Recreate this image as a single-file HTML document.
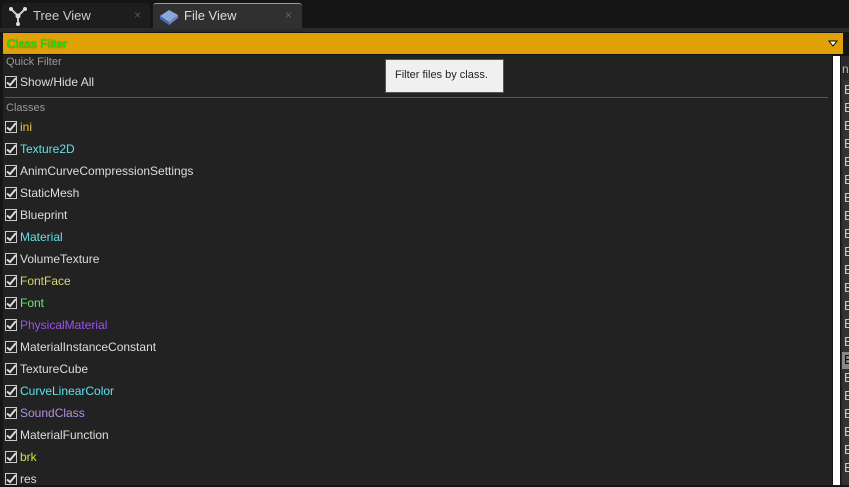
<!DOCTYPE html><html><head><style>
body{margin:0;width:849px;height:485px;background:#151515;overflow:hidden;position:relative;font-family:"Liberation Sans",sans-serif;font-size:12px;color:#ddd}
.abs{position:absolute}
.tab{position:absolute;top:3px;height:25px;background:#242424;border-radius:3px 3px 0 0}
.row{position:absolute;left:5px;height:16px;line-height:16px;font-size:12px}
.cb{display:inline-block;width:10px;height:10px;border:1px solid #ccc;vertical-align:-2px;margin-right:3px;position:relative}
.cb:after{content:"";position:absolute;left:3px;top:-1px;width:3px;height:8px;border:solid #ddd;border-width:0 2px 2px 0;transform:rotate(40deg)}
.e{position:absolute;left:844px;font-size:13px;color:#ccc}
</style></head><body>
<div class="abs" style="left:0;top:28px;width:849px;height:4px;background:#2a2a2a"></div>
<div class="tab" style="left:2px;width:148px;background:#1d1d1d"></div>
<svg class="abs" style="left:7px;top:5px" width="22" height="22"><g stroke="#ccc" stroke-width="2" fill="none"><path d="M4 4L11 11L18 4M11 11V19"/></g><circle cx="4" cy="4" r="2" fill="#ddd"/><circle cx="18" cy="4" r="2" fill="#ddd"/><circle cx="11" cy="11" r="2.5" fill="#ddd"/><circle cx="11" cy="19" r="2" fill="#ddd"/></svg>
<div class="abs" style="left:33px;top:8px;font-size:13px;color:#ccc">Tree View</div>
<div class="abs" style="left:134px;top:8px;font-size:12px;color:#555">×</div>
<div class="tab" style="left:153px;width:149px;background:#303030;border-top:1px solid #c8a020"></div>
<svg class="abs" style="left:158px;top:6px" width="22" height="20"><path d="M2 10L11 4L20 9L11 16Z" fill="#8aa8d8"/><path d="M2 10L11 16L11 19L2 13Z" fill="#4a68a8"/><path d="M11 16L20 9L20 12L11 19Z" fill="#6a88c0"/></svg>
<div class="abs" style="left:184px;top:8px;font-size:13px;color:#ddd">File View</div>
<div class="abs" style="left:285px;top:8px;font-size:12px;color:#666">×</div>
<div class="abs" style="left:3px;top:33px;width:840px;height:21px;background:#dea208;border-bottom:1px solid #111"></div>
<div class="abs" style="left:7px;top:37px;font-size:12px;color:#1e1;text-shadow:0 0 1px #050">Class Filter</div>
<svg class="abs" style="left:828px;top:40px" width="10" height="8"><path d="M1 1H9L5 6Z" fill="#fff" stroke="#000"/></svg>
<div class="abs" style="left:3px;top:55px;width:829px;height:430px;background:#222"></div>
<div class="abs" style="left:833px;top:56px;width:7px;height:429px;background:#fff"></div>
<div class="abs" style="left:841px;top:56px;width:8px;height:429px;background:#2a2a2a"></div>
<div class="abs" style="left:843px;top:80px;width:6px;height:405px;background:#333"></div>
<div class="abs" style="left:842px;top:352px;width:7px;height:17px;background:#888"></div>
<div class="abs" style="left:842px;top:62px;font-size:12px;color:#bbb">n</div>
<div class="abs" style="left:6px;top:56px;font-size:11px;color:#999">Quick Filter</div>
<div class="row" style="top:74px;color:#ddd"><span class="cb"></span>Show/Hide All</div>
<div class="abs" style="left:5px;top:97px;width:823px;height:1px;background:#555"></div>
<div class="abs" style="left:6px;top:102px;font-size:11px;color:#999">Classes</div>
<div class="row" style="top:119px;color:#e8c840"><span class="cb"></span>ini</div>
<div class="row" style="top:141px;color:#60e0e8"><span class="cb"></span>Texture2D</div>
<div class="row" style="top:163px"><span class="cb"></span>AnimCurveCompressionSettings</div>
<div class="row" style="top:185px"><span class="cb"></span>StaticMesh</div>
<div class="row" style="top:207px"><span class="cb"></span>Blueprint</div>
<div class="row" style="top:229px;color:#60e0e8"><span class="cb"></span>Material</div>
<div class="row" style="top:251px"><span class="cb"></span>VolumeTexture</div>
<div class="row" style="top:273px;color:#d8d870"><span class="cb"></span>FontFace</div>
<div class="row" style="top:295px;color:#70e870"><span class="cb"></span>Font</div>
<div class="row" style="top:317px;color:#a050f0"><span class="cb"></span>PhysicalMaterial</div>
<div class="row" style="top:339px"><span class="cb"></span>MaterialInstanceConstant</div>
<div class="row" style="top:361px"><span class="cb"></span>TextureCube</div>
<div class="row" style="top:383px;color:#60e0e8"><span class="cb"></span>CurveLinearColor</div>
<div class="row" style="top:405px;color:#b090e0"><span class="cb"></span>SoundClass</div>
<div class="row" style="top:427px"><span class="cb"></span>MaterialFunction</div>
<div class="row" style="top:449px;color:#d8e040"><span class="cb"></span>brk</div>
<div class="row" style="top:471px"><span class="cb"></span>res</div>
<div class="abs" style="left:385px;top:59px;width:117px;height:32px;background:#f0f0f0;border:1px solid #555"></div>
<div class="abs" style="left:395px;top:69px;font-size:11px;color:#222">Filter files by class.</div>
<div id="es"></div>
<script>
var h='';for(var i=0;i<22;i++){h+='<div class="e" style="top:'+(82+i*18)+'px;'+(i==15?'color:#111':'')+'">E</div>';}document.getElementById('es').innerHTML=h;
</script>
</body></html>
